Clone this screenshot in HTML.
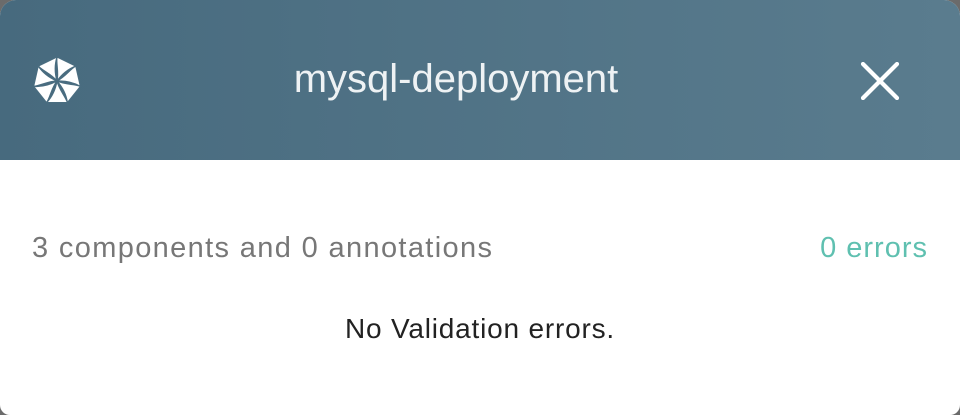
<!DOCTYPE html>
<html><head><style>
html,body{margin:0;padding:0;width:960px;height:415px;background:#6b6b6b;overflow:hidden;font-family:"Liberation Sans",sans-serif}
.card{position:absolute;left:0;top:0;width:960px;height:415px;background:#fff;border-radius:16px 16px 10px 10px;overflow:hidden}
.hdr{position:absolute;left:0;top:0;width:960px;height:160px;background:linear-gradient(90deg,#476a7e,#5a7c8e)}
.title{position:absolute;left:0;width:912px;top:57px;text-align:center;color:#eef2f4;font-size:40px}
.l{position:absolute;left:32px;top:232px;font-size:29px;color:#777;letter-spacing:1.35px}
.r{position:absolute;right:32px;top:232px;font-size:29px;color:#5fc0b0;letter-spacing:1px}
.c{position:absolute;left:0;width:960px;top:313px;text-align:center;font-size:28px;color:#222;letter-spacing:0.8px}
</style></head><body>
<div class="card">
<div class="hdr">
<svg style="position:absolute;left:31px;top:55px" width="52" height="52" viewBox="-26 -26 52 52">
<g stroke="#4a6d80" stroke-width="1.2" stroke-linejoin="round">
<g id="b"><path d="M0 -24 L18.76 -14.96 C11 -12 5 -7 0 0 C2 -9 -1 -17 0 -24 Z" fill="#fff"/></g>
<use href="#b" transform="rotate(51.43)"/><use href="#b" transform="rotate(102.86)"/><use href="#b" transform="rotate(154.29)"/><use href="#b" transform="rotate(205.71)"/><use href="#b" transform="rotate(257.14)"/><use href="#b" transform="rotate(308.57)"/>
</g></svg>
<div class="title">mysql-deployment</div>
<svg style="position:absolute;left:860px;top:62px" width="40" height="38" viewBox="0 0 40 38"><path d="M3 2 L37 36 M37 2 L3 36" stroke="#fff" stroke-width="4.2" stroke-linecap="round"/></svg>
</div>
<div class="l">3 components and 0 annotations</div>
<div class="r">0 errors</div>
<div class="c">No Validation errors.</div>
</div>
</body></html>
